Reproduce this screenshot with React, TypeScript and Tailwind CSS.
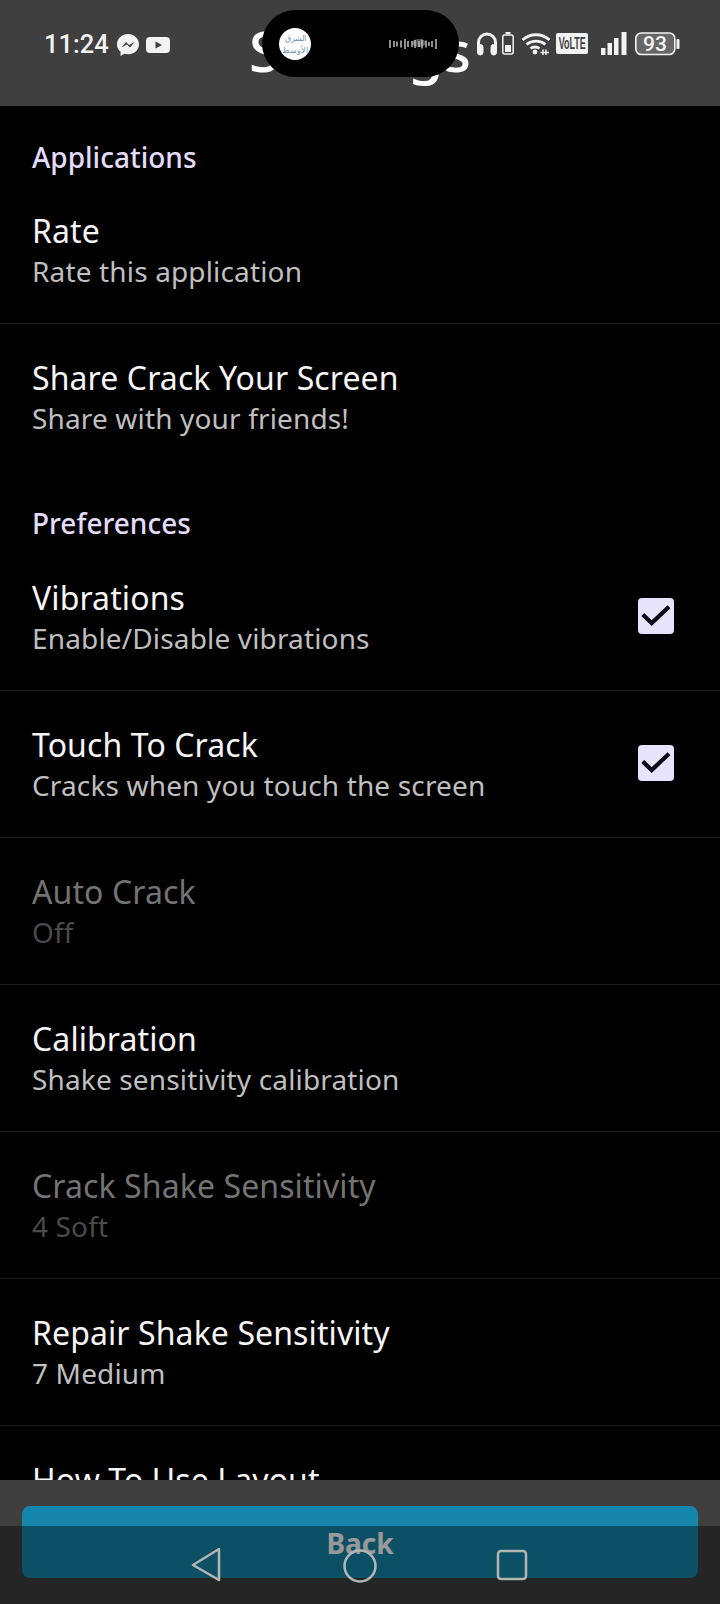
import React from "react";

type RowProps = { title: string; sub: string; disabled?: boolean; checked?: boolean; divider?: boolean };

function Check() {
  return (
    <div className="mb-[3px] flex h-9 w-9 items-center justify-center rounded-[4px] bg-[#e8e3fd]">
      <svg viewBox="0 0 36 36" className="h-9 w-9" fill="none">
        <path d="M4.700 16.500 L13.700 25 L31 8.700" stroke="#0b0a14" strokeWidth="4.200" />
      </svg>
    </div>
  );
}

function Row({ title, sub, disabled, checked, divider = true }: RowProps) {
  return (
    <div className={`flex h-[147px] items-center pl-8 pr-[46px] ${divider ? "border-b border-[#1b1b1b]" : ""}`}>
      <div className="min-w-0 flex-1 pt-[1px]">
        <div className={`text-[32px] leading-[40px] tracking-[0.1px] ${disabled ? "text-[#737373]" : "text-[#f5f5f5]"}`}>{title}</div>
        <div className={`text-[28px] leading-[40px] tracking-[0.15px] ${disabled ? "text-[#4a4a4a]" : "text-[#bfbfbf]"}`}>{sub}</div>
      </div>
      {checked && <Check />}
    </div>
  );
}

export default function App() {
  return (
    <div className="relative flex h-[1604px] w-[720px] flex-col overflow-hidden bg-black font-['Noto_Sans',sans-serif]">
      <header className="relative h-[106px] shrink-0 overflow-hidden bg-[#3f3f3f]">
        <div className="absolute inset-x-0 top-[13px] text-center text-[57px] font-medium leading-[75px] text-white">Settings</div>
        <div className="absolute left-[44px] top-[26px] font-['Roboto',sans-serif] text-[25.5px] font-medium leading-[36px] text-[#f2f2f2]">11:24</div>
        <svg viewBox="0 0 24 24" className="absolute left-[116px] top-[33px] h-[24px] w-[24px]" fill="#f2f2f2">
          <path d="M12 1C5.900 1 1 5.500 1 11.200c0 3 1.300 5.600 3.500 7.400V23l4-2.200c1.100.3 2.300.5 3.500.5 6.100 0 11-4.500 11-10.100S18.100 1 12 1z" />
          <path d="M5.500 14.500 10 9l3 3 5.500-3-4.500 5.500-3-3z" fill="#3f3f3f" />
        </svg>
        <svg viewBox="0 0 24 16" className="absolute left-[146px] top-[37px] h-[16px] w-[24px]">
          <rect width="24" height="16" rx="4" fill="#f2f2f2" />
          <path d="M9.500 4.500 16 8l-6.500 3.500z" fill="#3f3f3f" />
        </svg>
        <div className="absolute left-[262px] top-[10px] flex h-[67px] w-[197px] items-center rounded-[34px] bg-black">
          <div className="ml-[17px] flex h-8 w-8 flex-col items-center justify-center rounded-full bg-white text-[8px] leading-[12px] text-[#6b94b0]">
            <span>الشرق</span>
            <span>الأوسط</span>
          </div>
          <svg viewBox="0 0 48 12" className="ml-[78px] h-[12px] w-[48px]" stroke="#c9c9c9" strokeWidth="1.400">
            <ellipse cx="30" cy="5" rx="7" ry="4" fill="#555" stroke="none" />
            <path d="M1 2v8M5 3v6M8 3.500v5M12 2.500v7M16 1v10M19 3v6M23 3v6M26 2v8M30 3v6M33 1.500v9M37 2.500v7M40 4v4M43 3v6M47 1v10" />
          </svg>
        </div>
        <svg viewBox="0 0 240 30" className="absolute left-[476px] top-[30px] h-[30px] w-[240px]" fill="none" stroke="#f2f2f2">
          <path d="M2.500 20v-7.500a8.500 8.500 0 0 1 17 0v7.500" strokeWidth="3" />
          <rect x="1.500" y="14.500" width="5.500" height="10.500" rx="2.700" fill="#f2f2f2" strokeWidth="1" />
          <rect x="15" y="14.500" width="5.500" height="10.500" rx="2.700" fill="#f2f2f2" strokeWidth="1" />
          <rect x="26.800" y="5" width="10.400" height="19" rx="2" strokeWidth="1.500" />
          <rect x="29.500" y="2" width="5" height="2" fill="#f2f2f2" stroke="none" />
          <rect x="29" y="15" width="6" height="7" fill="#f2f2f2" stroke="none" />
          <path d="M46.500 10c7.500-7 19.500-7 27 0M50.500 14.500c5.500-4.500 13.500-4.500 19 0M54.500 18.500c2.500-2 6.500-2 9 0" strokeWidth="2.800" />
          <circle cx="59" cy="22" r="2.400" fill="#f2f2f2" stroke="none" />
          <path d="M64.500 22.500h8.500M67 19.500v5.500M70 19.500v5.500" strokeWidth="1.500" />
          <rect x="125" y="18" width="4.500" height="7" fill="#f2f2f2" stroke="none" />
          <rect x="131.500" y="13" width="4.500" height="12" fill="#f2f2f2" stroke="none" />
          <rect x="138" y="8" width="4.500" height="17" fill="#f2f2f2" stroke="none" />
          <rect x="145.500" y="2" width="5" height="23" fill="#f2f2f2" stroke="none" />
          <rect x="159.800" y="3" width="39" height="21.500" rx="5.500" fill="#666666" strokeWidth="1.600" />
          <rect x="200.500" y="9" width="3" height="10" rx="1" fill="#f2f2f2" stroke="none" />
        </svg>
        <div className="absolute left-[556px] top-[33px] flex h-[21px] w-[32px] items-center justify-center overflow-hidden rounded-[2px] bg-[#f2f2f2] font-['Liberation_Sans',sans-serif] text-[16px] font-bold leading-none text-[#3f3f3f]">
          <span className="inline-block scale-x-[0.56]">VoLTE</span>
        </div>
        <div className="absolute left-[636px] top-[33px] w-[38px] text-center font-['Roboto',sans-serif] text-[21px] font-medium leading-[22px] text-[#f2f2f2]">93</div>
      </header>

      <main className="flex-1 overflow-hidden">
        <div className="pl-8 pt-[31px] text-[28px] font-medium leading-[40px] text-[#e3dcfb]">Applications</div>
        <Row title="Rate" sub="Rate this application" />
        <Row title="Share Crack Your Screen" sub="Share with your friends!" divider={false} />
        <div className="pl-8 pt-[32px] text-[28px] font-medium leading-[40px] text-[#e3dcfb]">Preferences</div>
        <div className="pt-[1px]">
          <Row title="Vibrations" sub="Enable/Disable vibrations" checked />
        </div>
        <Row title="Touch To Crack" sub="Cracks when you touch the screen" checked />
        <Row title="Auto Crack" sub="Off" disabled />
        <Row title="Calibration" sub="Shake sensitivity calibration" />
        <Row title="Crack Shake Sensitivity" sub="4 Soft" disabled />
        <Row title="Repair Shake Sensitivity" sub="7 Medium" />
        <Row title="How To Use Layout" sub={"\u00a0"} divider={false} />
      </main>

      <footer className="absolute inset-x-0 bottom-0 h-[124px] bg-[#3f3f3f] px-[22px] pt-[26px]">
        <div className="flex h-[72px] justify-center rounded-[8px] bg-[#1585ab] pt-[17px] text-[28px] font-bold leading-[40px] text-white">Back</div>
      </footer>
      <div className="absolute inset-x-0 bottom-0 h-[78px] bg-black/40">
        <svg viewBox="0 0 720 78" className="h-[78px] w-[720px]" fill="none" stroke="#b4b4b4" strokeWidth="2.500">
          <path d="M219 23 L193 39 L219 54 Z" strokeLinejoin="round" />
          <ellipse cx="360" cy="40" rx="15.500" ry="15.500" />
          <rect x="498" y="25" width="28" height="28" rx="3" />
        </svg>
      </div>
    </div>
  );
}
